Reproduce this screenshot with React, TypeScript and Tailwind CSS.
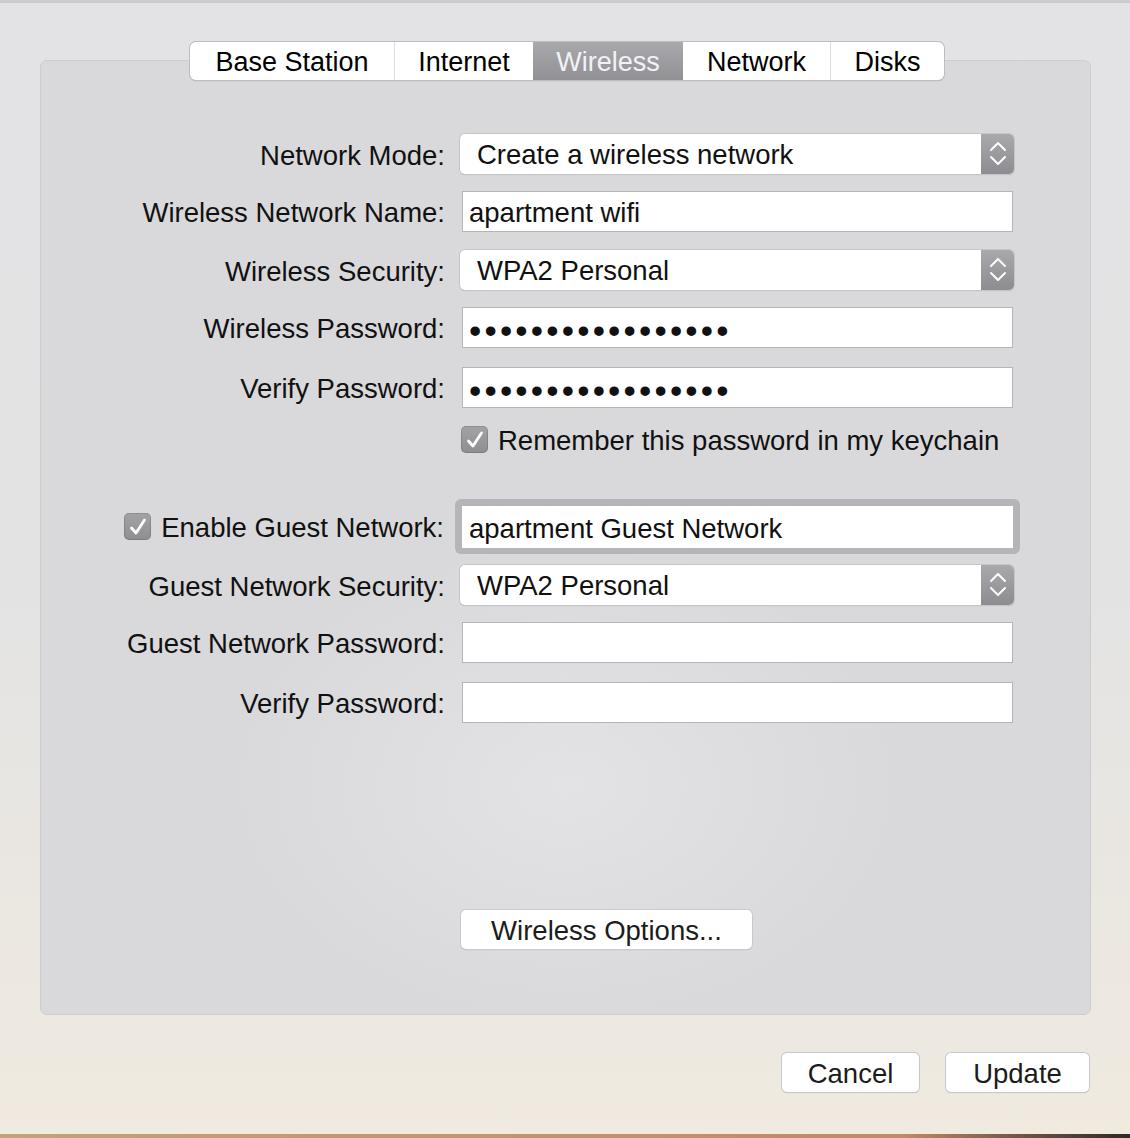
import React from 'react';

const tabs = [
  { label: 'Base Station', w: 'w-[204px]' },
  { label: 'Internet', w: 'w-[139px]' },
  { label: 'Wireless', w: 'w-[150px]', active: true },
  { label: 'Network', w: 'w-[147px]' },
  { label: 'Disks', w: 'w-[114px]' },
];

const Check = () => (
  <div className="flex h-[27px] w-[27px] shrink-0 items-center justify-center rounded-[5px] bg-gradient-to-b from-[#a3a3a7] to-[#8e8e92] shadow-[inset_0_0_0_1px_rgba(0,0,0,0.12)]">
    <svg width="22" height="22" viewBox="0 0 22 22" fill="none">
      <path d="M4.5 12 L9 17 L17.5 4" stroke="white" strokeWidth="2.8" strokeLinecap="round" strokeLinejoin="round" />
    </svg>
  </div>
);

const Select = ({ value }: { value: string }) => (
  <div className="flex h-[40px] w-[554px] overflow-hidden rounded-[5px] bg-white shadow-[0_0_0_1px_#c6c6c8,0_1px_1px_rgba(0,0,0,0.22)]">
    <div className="flex flex-1 items-center pl-[17px] pt-[2px]">{value}</div>
    <div className="flex w-[33px] items-center justify-center bg-gradient-to-b from-[#a9a9ad] to-[#8d8d91]">
      <svg width="18" height="28" viewBox="0 0 18 28" fill="none">
        <path d="M2 10 L9 3 L16 10" stroke="white" strokeWidth="2" strokeLinecap="round" strokeLinejoin="round" />
        <path d="M2 17 L9 24 L16 17" stroke="white" strokeWidth="2" strokeLinecap="round" strokeLinejoin="round" />
      </svg>
    </div>
  </div>
);

const Field = ({ value, dots }: { value?: string; dots?: boolean }) => (
  <div className="ml-[2px] flex h-[41px] w-[551px] items-center border border-[#b5b5b7] bg-white pl-[6px] pt-[2px]">
    {dots ? <span className="pt-[4px] text-[35px] tracking-[3.2px]">{'•'.repeat(17)}</span> : value}
  </div>
);

const Label = ({ children }: { children: React.ReactNode }) => (
  <div className="flex w-[405px] shrink-0 items-center justify-end pr-[1px] pt-[3px]">{children}</div>
);

const Button = ({ label, w }: { label: string; w: string }) => (
  <div className={`${w} flex h-[39px] items-center justify-center rounded-[5px] bg-white pt-[2px] text-[#1c1c1c] shadow-[0_0_0_1px_#c9c9cb,0_1px_1px_rgba(0,0,0,0.25)]`}>
    {label}
  </div>
);

export default function App() {
  return (
    <div className="relative h-[1138px] w-[1130px] overflow-hidden bg-gradient-to-b from-[#e3e3e5] via-[#e3e3e4] to-[#f0eadf] font-['Liberation_Sans',Arial,sans-serif] text-[27.5px] leading-none text-[#111]">
      <div className="h-[3px] bg-[#cbcbcd]" />
      <div className="px-[40px] pt-[39px]">
        {/* tab bar */}
        <div className="relative z-10 -mb-[20px] ml-[150px] flex h-[38px] w-fit overflow-hidden rounded-[6px] bg-white text-[27px] shadow-[0_0_0_1px_#bdbdc0,0_1px_1px_rgba(0,0,0,0.25)]">
          {tabs.map((t, i) => (
            <div
              key={t.label}
              className={`${t.w} flex items-center justify-center pt-[2px] ${
                t.active
                  ? 'bg-gradient-to-b from-[#a9a9ad] to-[#919195] text-[#f2f2f4]'
                  : 'text-black'
              } ${i > 0 && !t.active && !tabs[i - 1].active ? 'border-l border-[#dedee0]' : ''}`}
            >
              {t.label}
            </div>
          ))}
        </div>

        {/* panel */}
        <div className="h-[955px] w-[1051px] rounded-[7px] border border-[#cdcdcf] bg-[radial-gradient(ellipse_340px_240px_at_50%_76%,#e3e3e5_0%,#d9d9db_100%)] pt-[73px]">
          <div className="flex h-[40px] items-center">
            <Label>Network Mode:</Label>
            <div className="ml-[14px]"><Select value="Create a wireless network" /></div>
          </div>
          <div className="mt-[17px] flex h-[41px] items-center">
            <Label>Wireless Network Name:</Label>
            <div className="ml-[14px]"><Field value="apartment wifi" /></div>
          </div>
          <div className="mt-[18px] flex h-[40px] items-center">
            <Label>Wireless Security:</Label>
            <div className="ml-[14px]"><Select value="WPA2 Personal" /></div>
          </div>
          <div className="mt-[17px] flex h-[41px] items-center">
            <Label>Wireless Password:</Label>
            <div className="ml-[14px]"><Field dots /></div>
          </div>
          <div className="mt-[19px] flex h-[41px] items-center">
            <Label>Verify Password:</Label>
            <div className="ml-[14px]"><Field dots /></div>
          </div>
          <div className="mt-[18px] flex h-[27px] items-center">
            <div className="ml-[420px] flex items-center gap-[10px]">
              <Check />
              <span className="pt-[3px]">Remember this password in my keychain</span>
            </div>
          </div>
          <div className="mt-[46px] flex h-[55px] items-center">
            <Label>
              <div className="flex items-center gap-[10px] pr-[1px]">
                <div className="-mt-[3px]"><Check /></div>
                <span>Enable Guest Network:</span>
              </div>
            </Label>
            <div className="ml-[9px] rounded-[6px] bg-[#b5b5b9] px-[7px] pb-[6px] pt-[7px]">
              <div className="flex h-[42px] w-[551px] items-center bg-white pl-[7px] pt-[3px]">apartment Guest Network</div>
            </div>
          </div>
          <div className="mt-[11px] flex h-[40px] items-center">
            <Label>Guest Network Security:</Label>
            <div className="ml-[14px]"><Select value="WPA2 Personal" /></div>
          </div>
          <div className="mt-[17px] flex h-[41px] items-center">
            <Label>Guest Network Password:</Label>
            <div className="ml-[14px]"><Field /></div>
          </div>
          <div className="mt-[19px] flex h-[41px] items-center">
            <Label>Verify Password:</Label>
            <div className="ml-[14px]"><Field /></div>
          </div>
          <div className="ml-[420px] mt-[187px]">
            <Button label="Wireless Options..." w="w-[291px]" />
          </div>
        </div>

        {/* dialog buttons */}
        <div className="mt-[38px] flex justify-end gap-[27px] pr-[1px]">
          <Button label="Cancel" w="w-[137px]" />
          <Button label="Update" w="w-[143px]" />
        </div>
      </div>
      <div className="absolute bottom-0 left-0 h-[4px] w-full bg-gradient-to-r from-[#c2a276] via-[#c08a66] via-80% to-[#2c2a28]" />
    </div>
  );
}
